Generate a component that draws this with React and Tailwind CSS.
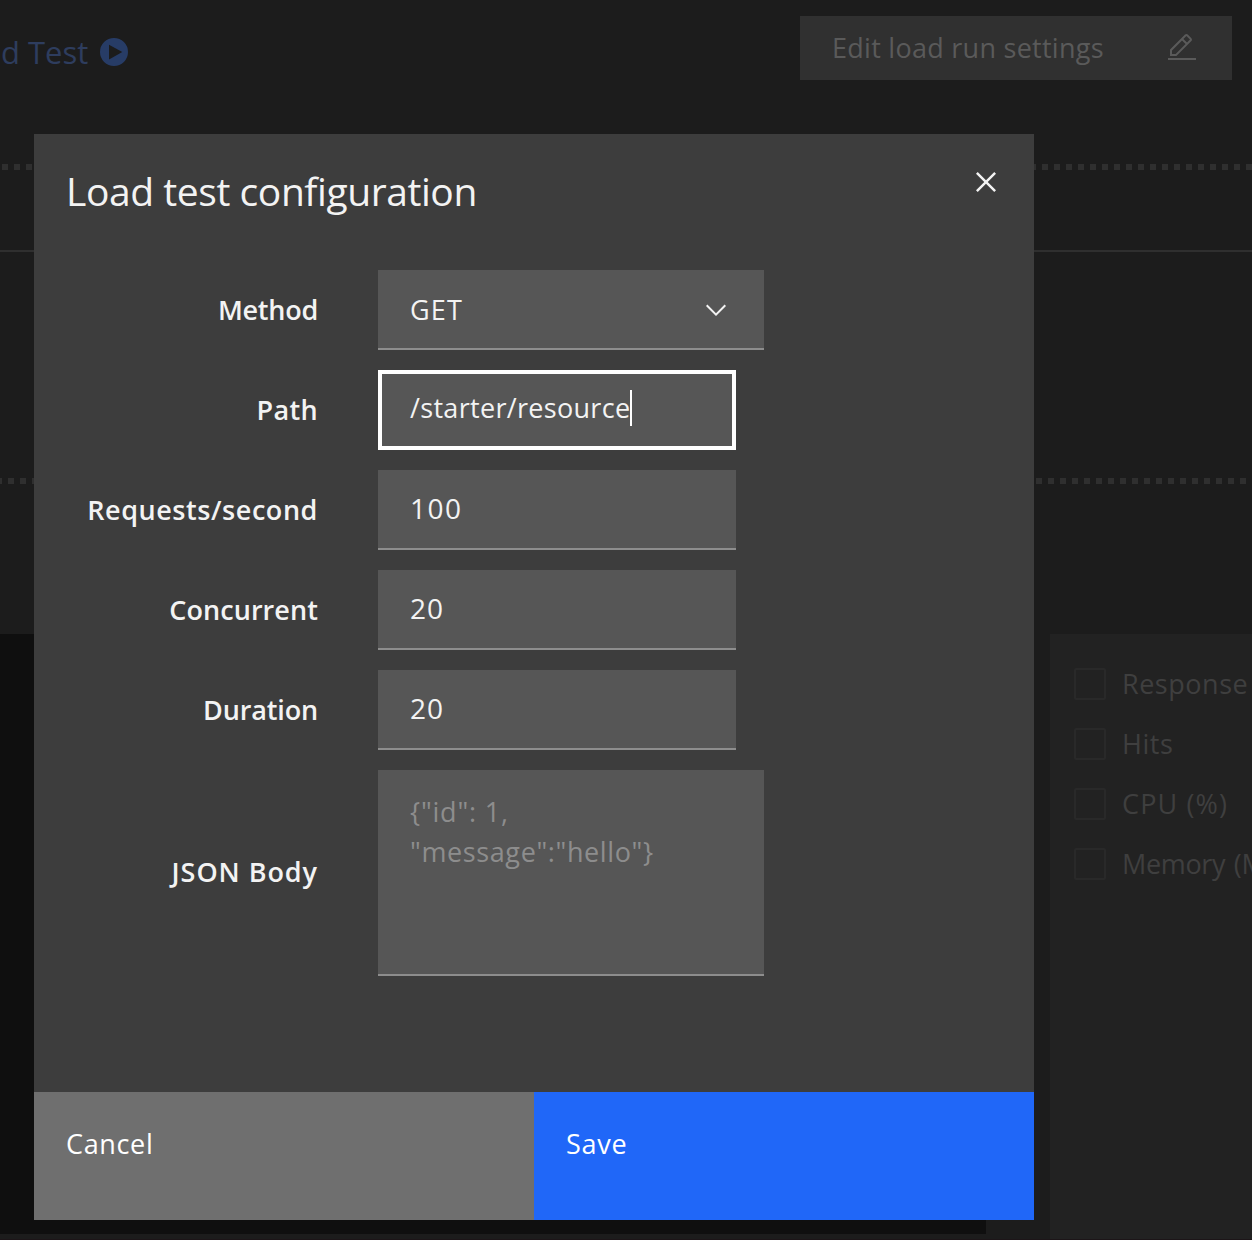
const fields = [
  { label: 'Path', value: '/starter/resource', labelTracking: 'tracking-[0.35px]', tracking: 'tracking-[0.31px]', focused: true },
  { label: 'Requests/second', value: '100', labelTracking: 'tracking-[0.56px]', tracking: 'text-[28px] tracking-[1.5px]' },
  { label: 'Concurrent', value: '20', labelTracking: 'tracking-[0.08px]', tracking: 'text-[28px] tracking-[0.9px]' },
  { label: 'Duration', value: '20', labelTracking: 'tracking-[-0.15px]', tracking: 'text-[28px] tracking-[0.9px]' },
];

const metrics = [
  { label: 'Response', tracking: 'tracking-[0.52px]' },
  { label: 'Hits', tracking: 'tracking-[0.55px]' },
  { label: 'CPU (%)', tracking: 'tracking-[1.13px]' },
  { label: 'Memory (MB)', tracking: 'tracking-[-0.35px] [word-spacing:2px]' },
];

const DASHES =
  'h-[6px] bg-[repeating-linear-gradient(90deg,#2f2f2f_0_6px,transparent_6px_12px)]';

function PlayIcon() {
  return (
    <svg viewBox="0 0 28 28" className="h-7 w-7" fill="#273c66">
      <path fillRule="evenodd" d="M14 0a14 14 0 1 0 0 28 14 14 0 0 0 0-28ZM9 21.4V6.7L22.3 14Z" />
    </svg>
  );
}

function EditIcon() {
  return (
    <svg viewBox="0 0 32 32" className="h-8 w-8" fill="#5a5a5a">
      <path d="M2 26h28v2H2zM25.4 9c.8-.8.8-2 0-2.8l-3.6-3.6c-.8-.8-2-.8-2.8 0l-15 15V24h6.400l15-15Zm-5-5L24 7.600l-3 3L17.400 7l3-3ZM6 22v-3.600l10-10 3.600 3.600-10 10H6Z" />
    </svg>
  );
}

function CloseIcon() {
  return (
    <svg viewBox="0 0 32 32" className="h-10 w-10" fill="#f3f3f3">
      <path d="M24 9.400 22.600 8 16 14.600 9.400 8 8 9.400 14.600 16 8 22.600 9.400 24 16 17.400 22.600 24 24 22.600 17.400 16Z" />
    </svg>
  );
}

function ChevronIcon() {
  return (
    <svg viewBox="0 0 16 16" className="mt-[2px] h-8 w-8" fill="#f3f3f3">
      <path d="M8 11 3 6l.700-.700L8 9.600l4.300-4.300.700.700Z" />
    </svg>
  );
}

function Label({ children, className }) {
  return (
    <label className={`w-[284px] shrink-0 text-right font-semibold leading-10 ${className}`}>
      {children}
    </label>
  );
}

function Page() {
  return (
    <div className="flex h-full flex-col">
      <header className="flex h-[164px] shrink-0 items-start justify-between pr-5 pt-4">
        <div className="flex items-center gap-[10px] pl-px pt-4">
          <span className="w-[89px] whitespace-nowrap text-[31px] leading-10 text-[#2e3d5e]">
            d Test
          </span>
          <PlayIcon />
        </div>
        <button className="flex h-16 w-[432px] items-center justify-between bg-[#303030] pl-8 pr-[34px] text-[#5a5a5a]">
          <span className="tracking-[0.27px]">Edit load run settings</span>
          <EditIcon />
        </button>
      </header>
      <div className="flex shrink-0 justify-between">
        <div className={`ml-[2px] w-[32px] ${DASHES}`} />
        <div className={`w-[222px] ${DASHES}`} />
      </div>
      <div className="mt-20 h-[2px] shrink-0 bg-[#2f2f2f]" />
      <div className="mt-[226px] flex shrink-0 justify-between">
        <div className={`-ml-1 w-[38px] ${DASHES}`} />
        <div className={`w-[216px] ${DASHES}`} />
      </div>
      <div className="mt-[150px] flex h-[605px] shrink-0 justify-between">
        <section className="h-[600px] w-[986px] bg-[#0f0f0f]" />
        <aside className="flex w-[202px] flex-col gap-5 overflow-hidden bg-[#222222] pl-6 pt-[30px] text-[#3f3f3f]">
          {metrics.map((m) => (
            <div key={m.label} className="flex h-10 shrink-0 items-center gap-4">
              <span className="h-8 w-8 shrink-0 rounded-[2px] border-2 border-[#292929]" />
              <span className={`whitespace-nowrap ${m.tracking}`}>{m.label}</span>
            </div>
          ))}
        </aside>
      </div>
      <div className="h-px shrink-0 bg-[#1c1518]" />
    </div>
  );
}

function Modal() {
  return (
    <div
      role="dialog"
      className="absolute left-[34px] top-[134px] flex h-[1086px] w-[1000px] flex-col bg-[#3d3d3d] text-[#f3f3f3]"
    >
      <div className="flex h-[136px] shrink-0 items-start justify-between pl-8 pr-7 pt-7">
        <h2 className="pt-px text-[39px] leading-[56px] tracking-[-0.43px]">Load test configuration</h2>
        <button aria-label="Close">
          <CloseIcon />
        </button>
      </div>

      <form className="flex grow flex-col gap-5">
        <div className="flex items-center gap-[60px]">
          <Label className="tracking-[-0.25px]">Method</Label>
          <div className="flex h-20 w-[386px] items-center justify-between border-b-2 border-[#8d8d8d] bg-[#565656] pl-8 pr-8">
            <span className="pt-[2px] tracking-[1.18px]">GET</span>
            <ChevronIcon />
          </div>
        </div>

        {fields.map((f) => (
          <div key={f.label} className="flex items-center gap-[60px]">
            <Label className={f.labelTracking}>{f.label}</Label>
            {f.focused ? (
              <div className="flex h-20 w-[358px] items-center border-4 border-white bg-[#565656] pb-1 pl-7">
                <span className={f.tracking}>{f.value}</span>
                <span className="h-9 w-[2px] bg-white" />
              </div>
            ) : (
              <div className="flex h-20 w-[358px] items-center border-b-2 border-[#8d8d8d] bg-[#565656] pb-[2px] pl-8">
                <span className={f.tracking}>{f.value}</span>
              </div>
            )}
          </div>
        ))}

        <div className="flex items-center gap-[60px]">
          <Label className="pb-[2px] tracking-[0.95px]">JSON Body</Label>
          <div className="h-[206px] w-[386px] border-b-2 border-[#8d8d8d] bg-[#565656] pl-8 pt-[22px] leading-10 text-[#8d8d8d]">
            <p className="tracking-[0.8px]">{'{"id": 1,'}</p>
            <p className="tracking-[0.62px]">{'"message":"hello"}'}</p>
          </div>
        </div>
      </form>

      <footer className="grid h-32 shrink-0 grid-cols-2 text-white">
        <button className="flex items-start bg-[#6f6f6f] pl-8 pt-8 leading-10 tracking-[0.65px]">Cancel</button>
        <button className="flex items-start bg-[#2067f8] pl-8 pt-8 leading-10 tracking-[0.75px]">Save</button>
      </footer>
    </div>
  );
}

export default function App() {
  return (
    <main className="relative h-[1240px] w-[1252px] overflow-hidden bg-[#1c1c1c] font-['Open_Sans','Noto_Sans',sans-serif] text-[27px] leading-10">
      <Page />
      <Modal />
    </main>
  );
}
